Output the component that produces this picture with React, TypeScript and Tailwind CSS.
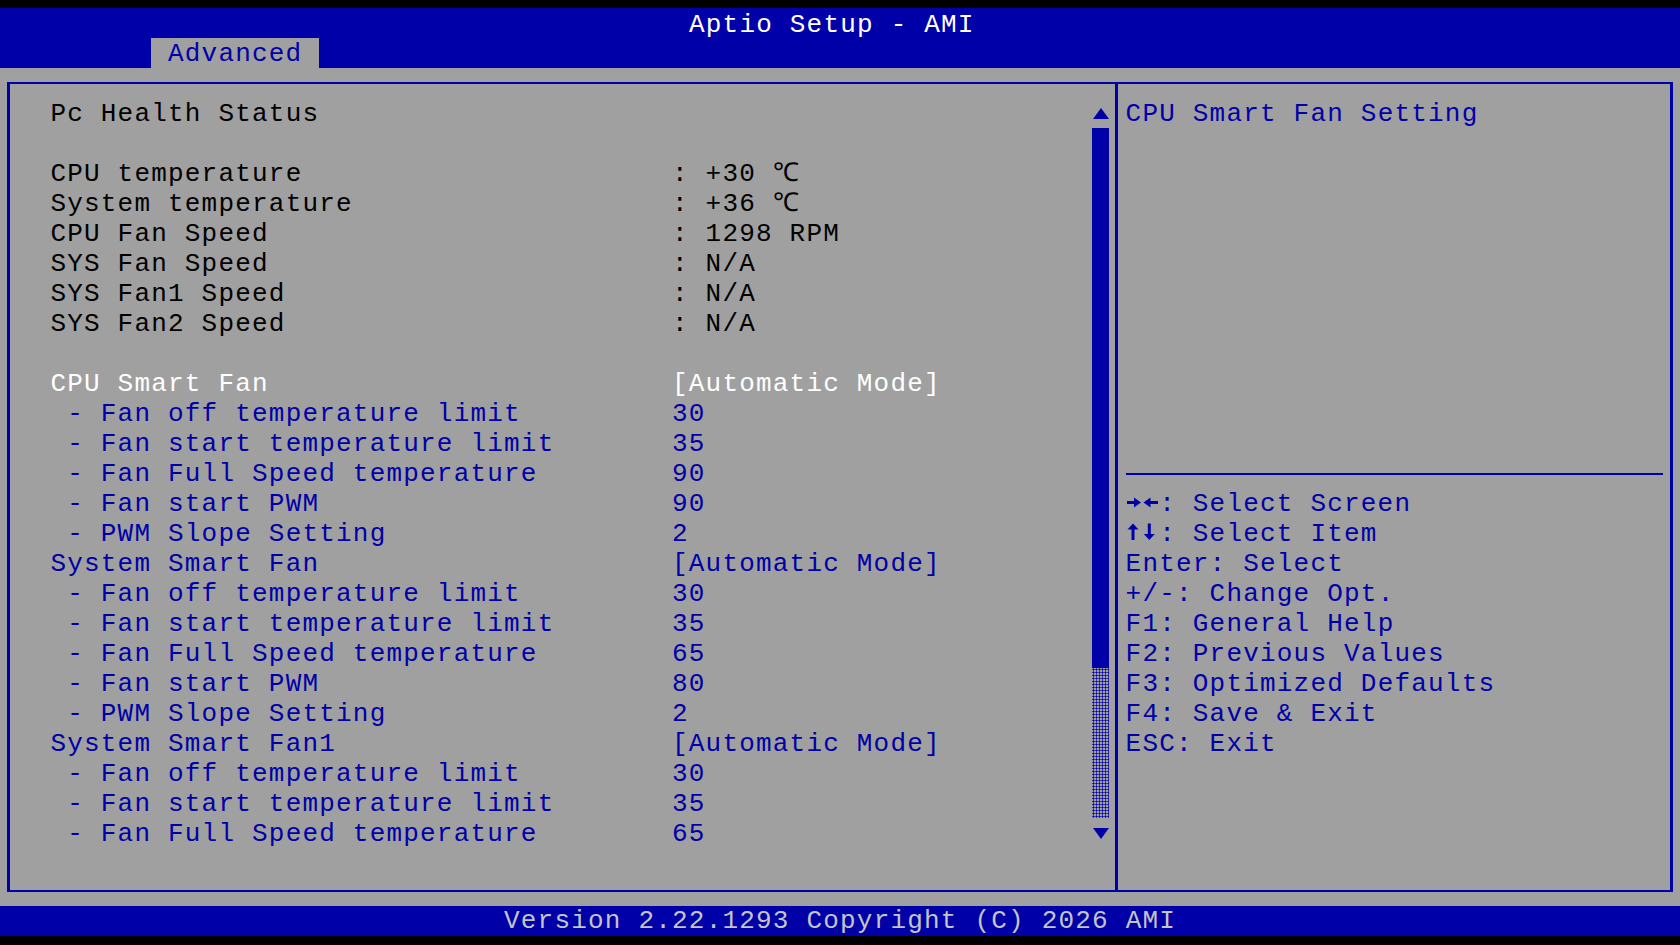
import React from "react";

type Tone = "black" | "white" | "blue";

interface Row {
  label: string;
  value: string;
  tone: Tone;
}

const toneClass: Record<Tone, string> = {
  black: "text-black",
  white: "text-white",
  blue: "text-[#0000a8]",
};

const rows: Row[] = [
  { label: "Pc Health Status", value: "", tone: "black" },
  { label: "", value: "", tone: "black" },
  { label: "CPU temperature", value: ": +30 \u2103", tone: "black" },
  { label: "System temperature", value: ": +36 \u2103", tone: "black" },
  { label: "CPU Fan Speed", value: ": 1298 RPM", tone: "black" },
  { label: "SYS Fan Speed", value: ": N/A", tone: "black" },
  { label: "SYS Fan1 Speed", value: ": N/A", tone: "black" },
  { label: "SYS Fan2 Speed", value: ": N/A", tone: "black" },
  { label: "", value: "", tone: "black" },
  { label: "CPU Smart Fan", value: "[Automatic Mode]", tone: "white" },
  { label: " - Fan off temperature limit", value: "30", tone: "blue" },
  { label: " - Fan start temperature limit", value: "35", tone: "blue" },
  { label: " - Fan Full Speed temperature", value: "90", tone: "blue" },
  { label: " - Fan start PWM", value: "90", tone: "blue" },
  { label: " - PWM Slope Setting", value: "2", tone: "blue" },
  { label: "System Smart Fan", value: "[Automatic Mode]", tone: "blue" },
  { label: " - Fan off temperature limit", value: "30", tone: "blue" },
  { label: " - Fan start temperature limit", value: "35", tone: "blue" },
  { label: " - Fan Full Speed temperature", value: "65", tone: "blue" },
  { label: " - Fan start PWM", value: "80", tone: "blue" },
  { label: " - PWM Slope Setting", value: "2", tone: "blue" },
  { label: "System Smart Fan1", value: "[Automatic Mode]", tone: "blue" },
  { label: " - Fan off temperature limit", value: "30", tone: "blue" },
  { label: " - Fan start temperature limit", value: "35", tone: "blue" },
  { label: " - Fan Full Speed temperature", value: "65", tone: "blue" },
];

// heavy arrow glyphs drawn as two 16.8px cells
const LeftRightKeys = () => (
  <svg width="33.6" height="30" viewBox="0 0 33.6 30" className="shrink-0">
    <rect x="1" y="12" width="8" height="3" fill="#0000a8" />
    <polygon points="8,8.5 15,13.5 8,18.5" fill="#0000a8" />
    <polygon points="17.5,13.5 24.5,8.5 24.5,18.5" fill="#0000a8" />
    <rect x="24" y="12" width="8" height="3" fill="#0000a8" />
  </svg>
);

const UpDownKeys = () => (
  <svg width="33.6" height="30" viewBox="0 0 33.6 30" className="shrink-0">
    <polygon points="1.5,10.5 7,4.5 12.5,10.5" fill="#0000a8" />
    <rect x="5.5" y="10" width="3" height="11" fill="#0000a8" />
    <rect x="21.8" y="4.5" width="3" height="11" fill="#0000a8" />
    <polygon points="17.8,15 23.3,21 28.8,15" fill="#0000a8" />
  </svg>
);

const helpLines: { keys?: "lr" | "ud"; text: string }[] = [
  { keys: "lr", text: ": Select Screen" },
  { keys: "ud", text: ": Select Item" },
  { text: "Enter: Select" },
  { text: "+/-: Change Opt." },
  { text: "F1: General Help" },
  { text: "F2: Previous Values" },
  { text: "F3: Optimized Defaults" },
  { text: "F4: Save & Exit" },
  { text: "ESC: Exit" },
];

const Arrow = ({ down }: { down?: boolean }) => (
  <svg width="16" height="11" viewBox="0 0 16 11">
    <polygon points={down ? "0,0 16,0 8,11" : "8,0 16,11 0,11"} fill="#0000a8" />
  </svg>
);

const App = () => {
  return (
    <div className="w-[1680px] h-[945px] bg-black flex flex-col overflow-hidden font-['Liberation_Mono','DejaVu_Sans_Mono',monospace] text-[26px] leading-[30px] tracking-[1.2px] whitespace-pre">
      <div className="h-[8px] shrink-0" />

      {/* Title + tab */}
      <div className="h-[60px] shrink-0 bg-[#0000a8] flex flex-col">
        <div className="h-[30px] pt-[2px] pl-[689px] text-white">Aptio Setup - AMI</div>
        <div className="h-[30px] flex pl-[151px]">
          <div className="w-[168px] bg-[#a0a0a0] pt-[1px] pl-[17px] text-[#0000a8]">Advanced</div>
        </div>
      </div>

      {/* Main area */}
      <div className="h-[838px] shrink-0 bg-[#a0a0a0] px-[7px] pt-[14px] pb-[14px]">
        <div className="h-[810px] flex border-[#0000a8] border-l-[3px] border-r-[3px] border-t-2 border-b-2">
          {/* Left: settings list */}
          <div className="w-[1105px] flex">
            <div className="w-[1082px] pt-[15px] pl-[40.4px]">
              {rows.map((row, i) => (
                <div key={i} className={`h-[30px] flex ${toneClass[row.tone]}`}>
                  <div className="w-[621.6px] shrink-0">{row.label}</div>
                  <div>{row.value}</div>
                </div>
              ))}
            </div>
            {/* Scrollbar */}
            <div className="w-[17px] pt-[14px] flex flex-col">
              <div className="h-[30px] flex items-center justify-center">
                <Arrow />
              </div>
              <div className="h-[540px] bg-[#0000a8]" />
              <div className="h-[150px] bg-[radial-gradient(circle,#0000a8_0.9px,transparent_1.2px)] bg-[length:3px_3px]" />
              <div className="h-[30px] flex items-center justify-center">
                <Arrow down />
              </div>
            </div>
          </div>

          {/* Right: help panel */}
          <div className="flex-1 border-l-[3px] border-[#0000a8] pt-[15px] pl-[7.6px] pr-[7px] text-[#0000a8]">
            <div className="h-[30px]">CPU Smart Fan Setting</div>
            <div className="h-[330px]" />
            <div className="h-[30px] flex items-center">
              <div className="h-[2px] w-full bg-[#0000a8]" />
            </div>
            {helpLines.map((line) => (
              <div key={line.text} className="h-[30px] flex">
                {line.keys === "lr" && <LeftRightKeys />}
                {line.keys === "ud" && <UpDownKeys />}
                <span>{line.text}</span>
              </div>
            ))}
          </div>
        </div>
      </div>

      {/* Footer */}
      <div className="h-[30px] shrink-0 bg-[#0000a8] pl-[504px] text-[#c4c4c4]">
        Version 2.22.1293 Copyright (C) 2026 AMI
      </div>
      <div className="flex-1" />
    </div>
  );
};

export default App;
